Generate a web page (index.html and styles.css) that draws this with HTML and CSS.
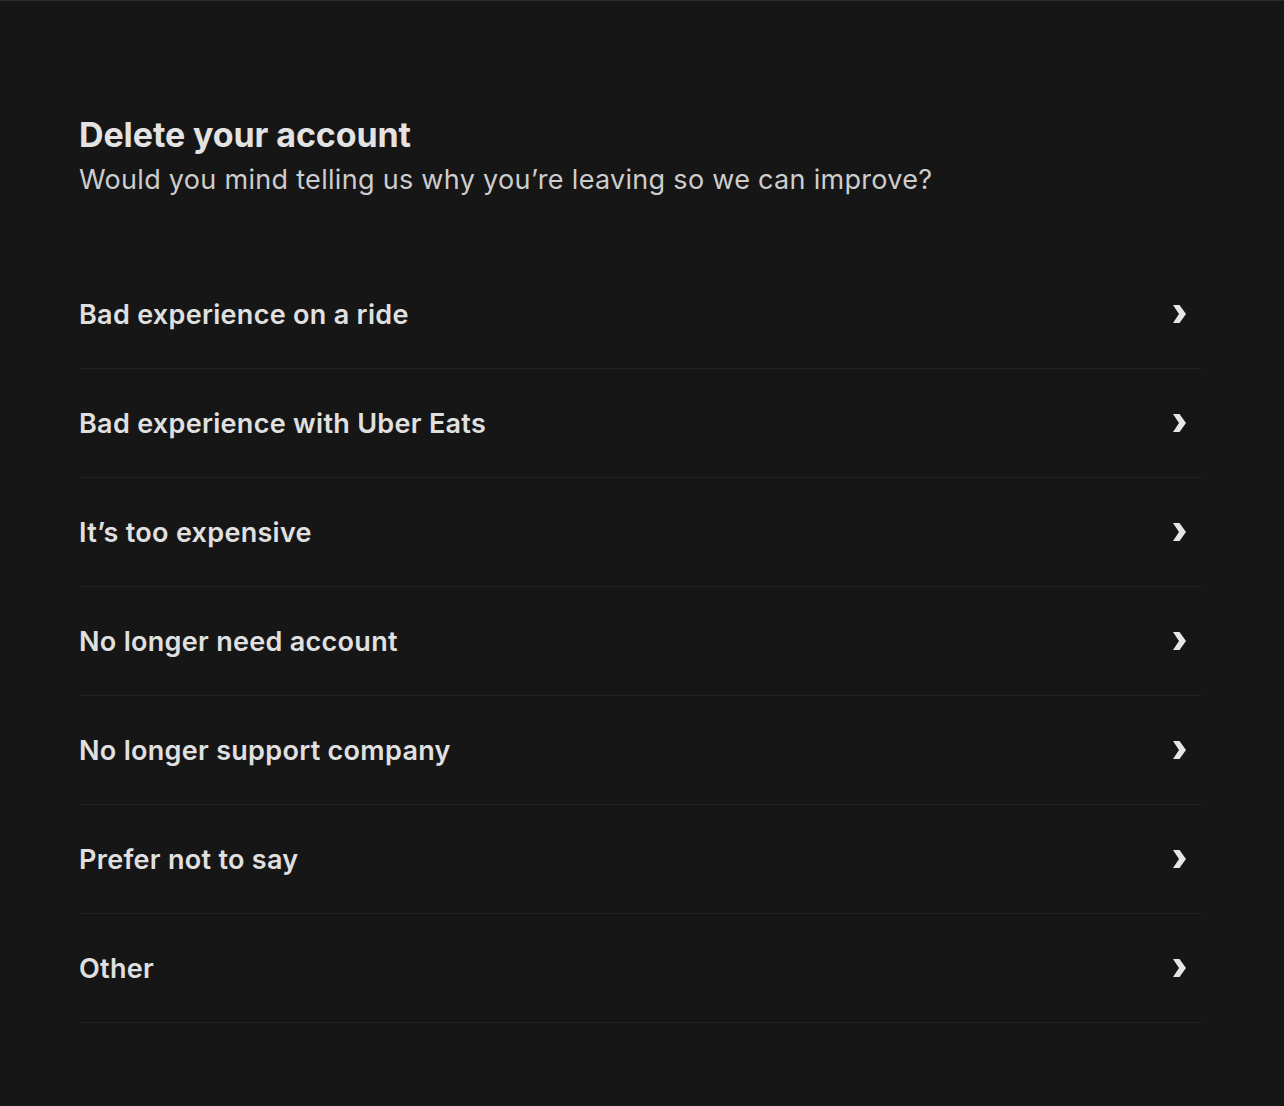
FILE: index.html
```html
<!DOCTYPE html>
<html lang="en">
<head>
<meta charset="utf-8">
<title>Delete your account</title>
<link rel="stylesheet" href="styles.css">
</head>
<body>
<main class="page">
  <header class="intro">
    <h1 class="title">Delete your account</h1>
    <p class="subtitle">Would you mind telling us why you’re leaving so we can improve?</p>
  </header>
  <ul class="reasons">
    <li class="reason"><span class="label">Bad experience on a ride</span><svg class="chev" viewBox="0 0 13 18" width="13" height="18"><polygon points="0,0 6.5,0 13,9 6.5,18 0,18 6,9"/></svg></li>
    <li class="reason"><span class="label">Bad experience with Uber Eats</span><svg class="chev" viewBox="0 0 13 18" width="13" height="18"><polygon points="0,0 6.5,0 13,9 6.5,18 0,18 6,9"/></svg></li>
    <li class="reason"><span class="label">It’s too expensive</span><svg class="chev" viewBox="0 0 13 18" width="13" height="18"><polygon points="0,0 6.5,0 13,9 6.5,18 0,18 6,9"/></svg></li>
    <li class="reason"><span class="label">No longer need account</span><svg class="chev" viewBox="0 0 13 18" width="13" height="18"><polygon points="0,0 6.5,0 13,9 6.5,18 0,18 6,9"/></svg></li>
    <li class="reason"><span class="label">No longer support company</span><svg class="chev" viewBox="0 0 13 18" width="13" height="18"><polygon points="0,0 6.5,0 13,9 6.5,18 0,18 6,9"/></svg></li>
    <li class="reason"><span class="label">Prefer not to say</span><svg class="chev" viewBox="0 0 13 18" width="13" height="18"><polygon points="0,0 6.5,0 13,9 6.5,18 0,18 6,9"/></svg></li>
    <li class="reason"><span class="label">Other</span><svg class="chev" viewBox="0 0 13 18" width="13" height="18"><polygon points="0,0 6.5,0 13,9 6.5,18 0,18 6,9"/></svg></li>
  </ul>
</main>
</body>
</html>
```
FILE: styles.css
```css
html, body {
  margin: 0;
  padding: 0;
  background: #161616;
}
body {
  border-top: 1px solid #2b2b2b;
  min-height: 1105px;
  font-family: Inter, "Noto Sans", "Liberation Sans", sans-serif;
  color: #e2e2e2;
}
.page {
  padding: 112px 82px 0 79px;
}
.intro {
  margin-bottom: 60px;
}
.title {
  margin: 0;
  font-size: 34px;
  line-height: 44px;
  font-weight: 700;
  letter-spacing: -0.1px;
  color: #e3e3e3;
}
.subtitle {
  margin: 3px 0 0;
  font-size: 27px;
  line-height: 40px;
  font-weight: 400;
  letter-spacing: 0.3px;
  color: #cdcdcd;
}
.reasons {
  list-style: none;
  margin: 0;
  padding: 0;
}
.reason {
  display: flex;
  align-items: center;
  justify-content: space-between;
  height: 108px;
  border-bottom: 1px solid #222222;
  padding-right: 16px;
}
.label {
  font-size: 27px;
  font-weight: 600;
  letter-spacing: 0.3px;
  color: #e0e0e0;
}
.chev {
  fill: #e6e6e6;
  display: block;
}
```
